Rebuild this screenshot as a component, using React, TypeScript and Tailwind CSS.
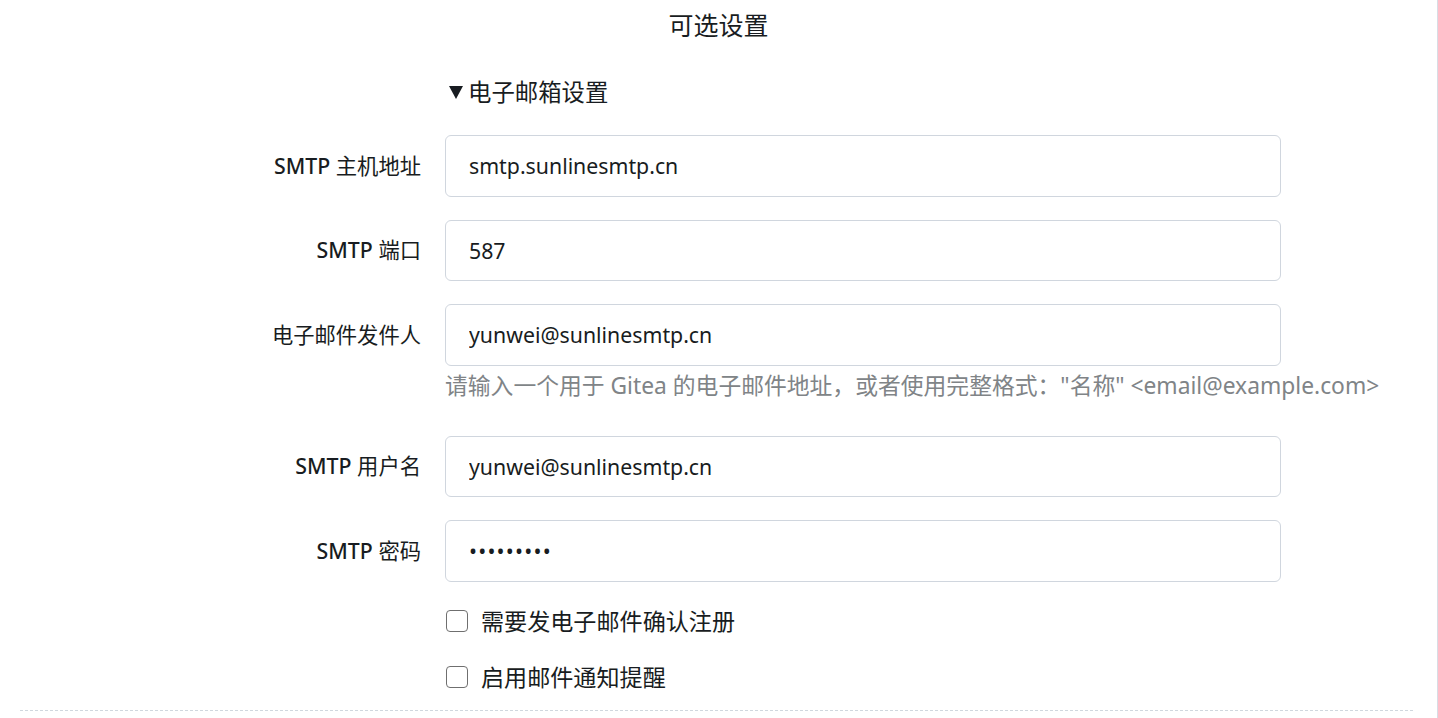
import { useState } from "react";

const font = "font-['Noto_Sans','Noto_Sans_CJK_SC',sans-serif]";

type Field = {
  label: string;
  value: string;
  type?: string;
  hint?: string;
};

const fields: Field[] = [
  { label: "SMTP 主机地址", value: "smtp.sunlinesmtp.cn" },
  { label: "SMTP 端口", value: "587" },
  {
    label: "电子邮件发件人",
    value: "yunwei@sunlinesmtp.cn",
    hint: '请输入一个用于 Gitea 的电子邮件地址，或者使用完整格式："名称" <email@example.com>',
  },
  { label: "SMTP 用户名", value: "yunwei@sunlinesmtp.cn" },
  { label: "SMTP 密码", value: "123456789", type: "password" },
];

const FormRow = ({ field }: { field: Field }) => {
  const [value, setValue] = useState(field.value);
  const smtp = field.label.startsWith("SMTP ");
  return (
    <div className="mb-[23px]">
      <div className="flex flex-row items-center">
        {/* label kiri, rata kanan */}
        <label className="w-[401px] text-right text-[21.3px] text-[#181c21]">
          {smtp ? (
            <>
              <span className="font-medium">SMTP</span> {field.label.slice(5)}
            </>
          ) : (
            field.label
          )}
        </label>
        <input
          type={field.type ?? "text"}
          value={value}
          onChange={(e) => setValue(e.target.value)}
          className={`ml-[24px] w-[836px] h-[61.5px] rounded-[6px] border border-[#d0d6de] bg-white px-[23px] text-[21.3px] text-[#181c21] outline-none ${
            field.type === "password" ? "tracking-[1.2px]" : ""
          }`}
        />
      </div>
      {field.hint && (
        <p className="ml-[425px] mt-[4px] mb-[34px] text-[22.8px] leading-[32px] text-[#808487]">
          {field.hint}
        </p>
      )}
    </div>
  );
};

const CheckRow = ({ label }: { label: string }) => {
  const [checked, setChecked] = useState(false);
  return (
    <label className="ml-[426px] flex flex-row items-center gap-[13px] cursor-pointer">
      <input
        type="checkbox"
        checked={checked}
        onChange={() => setChecked(!checked)}
        className="appearance-none size-[22px] rounded-[4px] border-[1.5px] border-[#6f6f6f] bg-white checked:bg-[#4183c4]"
      />
      <span className="text-[23.1px] leading-[32px] text-[#181c21]">{label}</span>
    </label>
  );
};

const App = () => {
  return (
    <div className={`${font} w-full h-[718px] overflow-hidden bg-white border-r border-[#d8dde5]`}>
      <div className="mx-[20px]">
        {/* judul bagian */}
        <h4 className="pt-[10px] text-center text-[25px] leading-[31px] text-[#181c21]">
          可选设置
        </h4>

        {/* details email */}
        <div className="mt-[35px] ml-[429px] flex flex-row items-center gap-[5px] text-[23.4px] leading-[32px] text-[#181c21]">
          <svg width="14" height="13" viewBox="0 0 14 13">
            <polygon points="0,0 14,0 7,13" fill="#181c21" />
          </svg>
          <span>电子邮箱设置</span>
        </div>

        <div className="mt-[27px]">
          {fields.map((f) => (
            <FormRow key={f.label} field={f} />
          ))}
        </div>

        <div className="mt-[18px] flex flex-col gap-[24px]">
          <CheckRow label="需要发电子邮件确认注册" />
          <CheckRow label="启用邮件通知提醒" />
        </div>

        <div className="mt-[17px] border-t border-dashed border-[#d0d7de] w-[1393px]" />
      </div>
    </div>
  );
};

export default App;
